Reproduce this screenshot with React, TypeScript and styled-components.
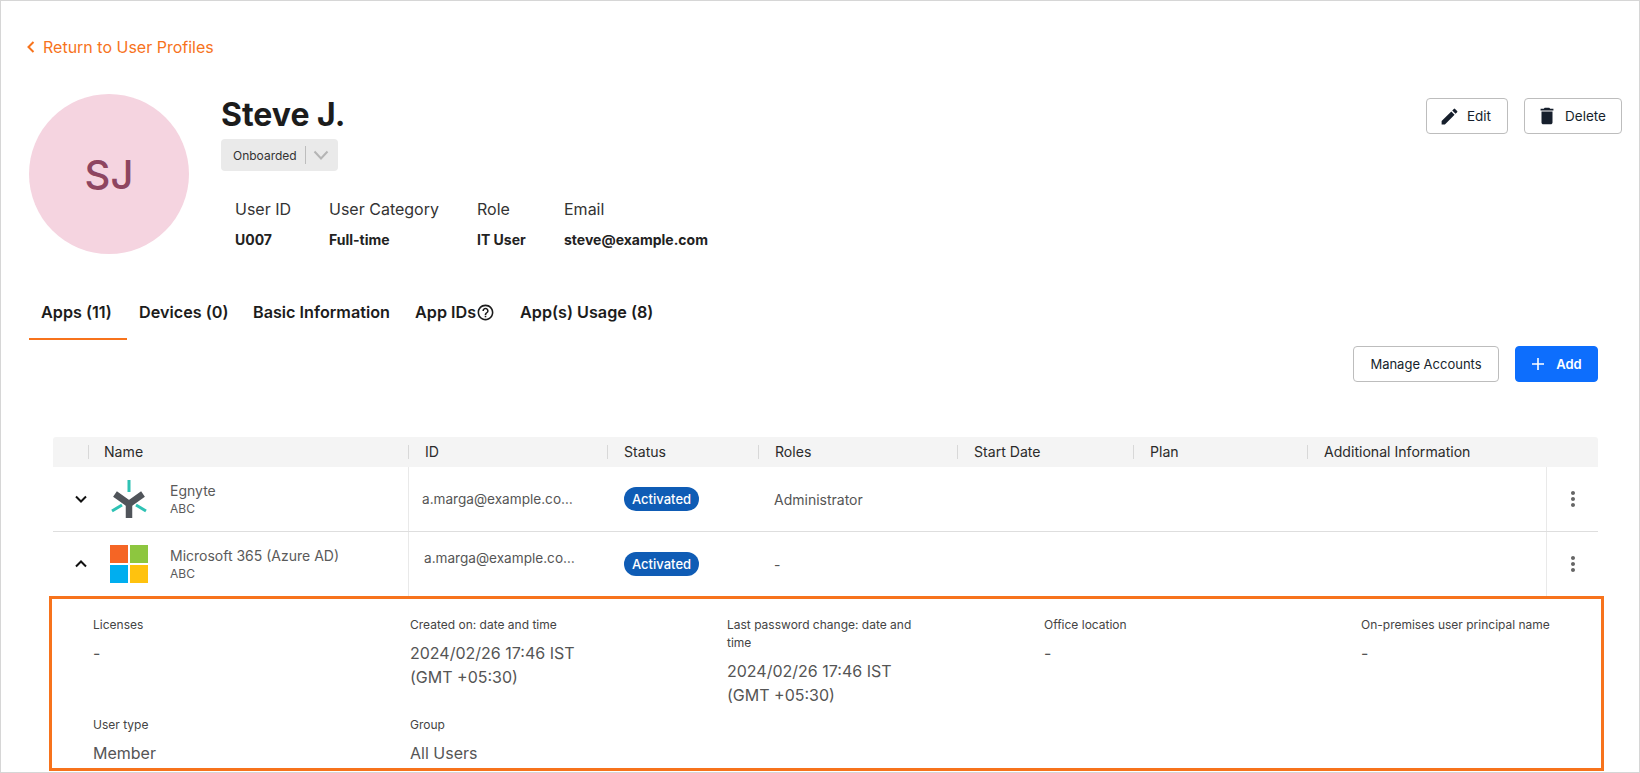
import { createGlobalStyle, styled } from "styled-components";
import { MdDelete, MdEdit, MdHelpOutline, MdMoreVert } from "react-icons/md";

const GlobalStyle = createGlobalStyle`
  * {
    box-sizing: border-box;
  }
  html, body {
    margin: 0;
    padding: 0;
    background: #fff;
    font-family: Inter, "Liberation Sans", sans-serif;
    color: #1a1a1a;
  }
`;

const Page = styled.div`
  width: 1640px;
  height: 773px;
  overflow: hidden;
  border: 1px solid #d6d6d6;
  padding: 37px 17px 0 28px;
`;

const BackLink = styled.a`
  display: flex;
  align-items: center;
  gap: 8px;
  height: 18px;
  margin-left: -2px;
  color: #f7731c;
  font-size: 16px;
  svg {
    width: 8px;
    height: 12px;
  }
`;

const Profile = styled.section`
  display: flex;
  margin-top: 38px;
`;

const Avatar = styled.div`
  width: 160px;
  height: 160px;
  flex: none;
  border-radius: 50%;
  background: #f5d4e0;
  color: #8e4560;
  font-size: 40px;
  font-weight: 500;
  display: flex;
  align-items: center;
  justify-content: center;
`;

const ProfileBody = styled.div`
  margin-left: 32px;
  flex: 1;
`;

const Name = styled.h1`
  margin: 3px 0 0;
  font-size: 32px;
  line-height: 36px;
  font-weight: 700;
  color: #1c1c1c;
`;

const StatusSelect = styled.div`
  display: flex;
  align-items: center;
  width: 117px;
  height: 32px;
  margin-top: 6px;
  padding-left: 12px;
  border-radius: 4px;
  background: #eaeaea;
  font-size: 12px;
  color: #333;
`;

const SelectDivider = styled.span`
  width: 1px;
  height: 18px;
  margin: 0 7px 0 8px;
  background: #bdbdbd;
`;

const InfoGrid = styled.div`
  display: grid;
  grid-template-columns: 94px 148px 87px auto;
  justify-content: start;
  margin: 28px 0 0 14px;
`;

const InfoLabel = styled.div`
  font-size: 16px;
  line-height: 20px;
  color: #333;
`;

const InfoValue = styled.div`
  margin-top: 11px;
  font-size: 14px;
  line-height: 20px;
  font-weight: 700;
  color: #222;
`;

const ProfileActions = styled.div`
  display: flex;
  gap: 16px;
  margin-top: 4px;
`;

const Button = styled.button<{ $primary?: boolean; $w: number; $gap?: number }>`
  display: flex;
  align-items: center;
  justify-content: center;
  gap: ${(p) => p.$gap ?? 7}px;
  width: ${(p) => p.$w}px;
  height: 36px;
  border-radius: 4px;
  border: 1px solid ${(p) => (p.$primary ? "#0d6efd" : "#bdbdbd")};
  background: ${(p) => (p.$primary ? "#0d6efd" : "#fff")};
  color: ${(p) => (p.$primary ? "#fff" : "#161f2c")};
  font-family: inherit;
  font-size: 13px;
  font-weight: ${(p) => (p.$primary ? 600 : 400)};
  padding: 0;
  svg {
    flex: none;
  }
`;

const IconButton = styled(Button)`
  font-size: 13.5px;
  padding-right: 4px;
`;

const Tabs = styled.nav`
  display: flex;
  margin-top: 36px;
`;

const Tab = styled.div<{ $active?: boolean; $w: number }>`
  width: ${(p) => p.$w}px;
  height: 50px;
  padding: 12px 0 0 12px;
  font-size: 16.2px;
  line-height: 20px;
  font-weight: 600;
  color: #1c1c1c;
  border-bottom: 2px solid ${(p) => (p.$active ? "#f7731c" : "transparent")};
  display: flex;
  align-items: flex-start;
  white-space: nowrap;
  svg {
    width: 19px;
    height: 19px;
    margin-top: 1px;
  }
`;

const Toolbar = styled.div`
  display: flex;
  justify-content: flex-end;
  gap: 16px;
  margin: 6px 24px 0 0;
`;

const Table = styled.div`
  margin: 55px 24px 0 24px;
`;

const columns = "355px 199px 151px 199px 176px 174px 239px 52px";

const HeadRow = styled.div`
  display: grid;
  grid-template-columns: ${columns};
  height: 30px;
  padding-bottom: 1px;
  background: #f4f4f4;
  border-radius: 3px 3px 0 0;
  font-size: 14.1px;
  color: #2b2b2b;
`;

const HeadCell = styled.div<{ $nameCol?: boolean }>`
  display: flex;
  align-items: center;
  padding-left: ${(p) => (p.$nameCol ? "35px" : "0")};
  &::before {
    content: "";
    width: 1px;
    height: 14px;
    margin-right: ${(p) => (p.$nameCol ? "15px" : "16px")};
    background: #d8d8d8;
  }
`;

const Row = styled.div<{ $last?: boolean }>`
  display: grid;
  grid-template-columns: ${columns};
  height: ${(p) => (p.$last ? "64px" : "65px")};
  border-bottom: ${(p) => (p.$last ? "none" : "1px solid #dedede")};
  font-size: 14px;
  color: #555;
`;

const NameCell = styled.div`
  display: flex;
  align-items: center;
  margin-right: -1px;
  border-right: 1px solid #e9e9e9;
  svg {
    flex: none;
  }
`;

const Chevron = styled.svg`
  width: 12px;
  height: 8px;
  margin: 0 23px 0 22px;
`;

const AppName = styled.div`
  margin-left: 22px;
  font-size: 14px;
  line-height: 19px;
  color: #5a5a5a;
  small {
    display: block;
    font-size: 12px;
    line-height: 17px;
  }
`;

const Cell = styled.div<{ $raise?: number; $inset?: number }>`
  display: flex;
  align-items: center;
  padding-left: ${(p) => p.$inset ?? 16}px;
  padding-bottom: ${(p) => p.$raise ?? 0}px;
  white-space: nowrap;
`;

const IdCell = styled(Cell)`
  font-size: 13.6px;
`;

const Badge = styled.span`
  height: 24px;
  padding: 0 8px;
  border-radius: 12px;
  background: #0f5cb5;
  color: #fff;
  font-size: 13px;
  font-weight: 500;
  line-height: 24px;
`;

const ActionCell = styled.div`
  display: flex;
  align-items: center;
  justify-content: center;
  border-left: 1px solid #e9e9e9;
  color: #666;
`;

const DetailPanel = styled.div`
  display: grid;
  grid-template-columns: repeat(5, 317px);
  grid-template-rows: 100px auto;
  height: 175px;
  margin: 0 -6px 0 -4px;
  padding: 17px 0 0 41px;
  border: 3px solid #f7731c;
`;

const Detail = styled.div``;

const DetailLabel = styled.div`
  width: 190px;
  font-size: 12px;
  line-height: 18px;
  color: #444;
  white-space: nowrap;
  margin-bottom: 7px;
`;

const WrappedLabel = styled(DetailLabel)`
  white-space: normal;
`;

const DetailValue = styled.div`
  width: 190px;
  font-size: 16px;
  line-height: 24px;
  color: #555;
`;

function App() {
  return (
    <Page>
      <GlobalStyle />
      <BackLink>
        <svg viewBox="0 0 8 12" fill="none" stroke="#f7731c" strokeWidth="2">
          <path d="M6.5 1 1.5 6l5 5" />
        </svg>
        Return to User Profiles
      </BackLink>

      <Profile>
        <Avatar>SJ</Avatar>
        <ProfileBody>
          <Name>Steve J.</Name>
          <StatusSelect>
            Onboarded
            <SelectDivider />
            <svg width="16" height="10" viewBox="0 0 16 10" fill="none" stroke="#b5b5b5" strokeWidth="2">
              <path d="M1.5 1.500 8 8.500l6.500-7" />
            </svg>
          </StatusSelect>
          <InfoGrid>
            <InfoLabel>User ID</InfoLabel>
            <InfoLabel>User Category</InfoLabel>
            <InfoLabel>Role</InfoLabel>
            <InfoLabel>Email</InfoLabel>
            <InfoValue>U007</InfoValue>
            <InfoValue>Full-time</InfoValue>
            <InfoValue>IT User</InfoValue>
            <InfoValue>steve@example.com</InfoValue>
          </InfoGrid>
        </ProfileBody>
        <ProfileActions>
          <IconButton $w={82}>
            <MdEdit size={21} />
            Edit
          </IconButton>
          <IconButton $w={98}>
            <MdDelete size={22} />
            Delete
          </IconButton>
        </ProfileActions>
      </Profile>

      <Tabs>
        <Tab $active $w={98}>Apps (11)</Tab>
        <Tab $w={114}>Devices (0)</Tab>
        <Tab $w={162}>Basic Information</Tab>
        <Tab $w={105}>
          App IDs
          <MdHelpOutline />
        </Tab>
        <Tab $w={160}>App(s) Usage (8)</Tab>
      </Tabs>

      <Toolbar>
        <Button $w={146}>Manage Accounts</Button>
        <Button $primary $w={83} $gap={11}>
          <svg width="14" height="14" viewBox="0 0 14 14" stroke="#fff" strokeWidth="1.6">
            <path d="M7 1v12M1 7h12" />
          </svg>
          Add
        </Button>
      </Toolbar>

      <Table>
        <HeadRow>
          <HeadCell $nameCol>Name</HeadCell>
          <HeadCell>ID</HeadCell>
          <HeadCell>Status</HeadCell>
          <HeadCell>Roles</HeadCell>
          <HeadCell>Start Date</HeadCell>
          <HeadCell>Plan</HeadCell>
          <HeadCell>Additional Information</HeadCell>
          <div />
        </HeadRow>

        <Row>
          <NameCell>
            <Chevron viewBox="0 0 12 8" fill="none" stroke="#111" strokeWidth="2">
              <path d="M1 1.500 6 6.500l5-5" />
            </Chevron>
            <svg width="38" height="39" viewBox="0 0 38 39">
              <path d="M5 14 19 24 33 14" fill="none" stroke="#50545a" strokeWidth="6.500" />
              <path d="M19 23v15" stroke="#50545a" strokeWidth="6.500" />
              <path d="M19 0v12M2 31l10-6M36 31l-10-6" stroke="#2fc2b4" strokeWidth="3" />
            </svg>
            <AppName>
              Egnyte
              <small>ABC</small>
            </AppName>
          </NameCell>
          <IdCell $inset={14}>a.marga@example.co…</IdCell>
          <Cell $inset={17}><Badge>Activated</Badge></Cell>
          <Cell>Administrator</Cell>
          <Cell />
          <Cell />
          <Cell />
          <ActionCell><MdMoreVert size={24} /></ActionCell>
        </Row>

        <Row $last>
          <NameCell>
            <Chevron viewBox="0 0 12 8" fill="none" stroke="#111" strokeWidth="2">
              <path d="M1 6.500 6 1.500l5 5" />
            </Chevron>
            <svg width="38" height="38" viewBox="0 0 38 38">
              <rect width="18" height="18" fill="#f56525" />
              <rect x="20" width="18" height="18" fill="#8dc63f" />
              <rect y="20" width="18" height="18" fill="#00aeef" />
              <rect x="20" y="20" width="18" height="18" fill="#ffc20e" />
            </svg>
            <AppName>
              Microsoft 365 (Azure AD)
              <small>ABC</small>
            </AppName>
          </NameCell>
          <IdCell $raise={12}>a.marga@example.co…</IdCell>
          <Cell $inset={17}><Badge>Activated</Badge></Cell>
          <Cell>-</Cell>
          <Cell />
          <Cell />
          <Cell />
          <ActionCell><MdMoreVert size={24} /></ActionCell>
        </Row>

        <DetailPanel>
          <Detail>
            <DetailLabel>Licenses</DetailLabel>
            <DetailValue>-</DetailValue>
          </Detail>
          <Detail>
            <DetailLabel>Created on: date and time</DetailLabel>
            <DetailValue>2024/02/26 17:46 IST (GMT +05:30)</DetailValue>
          </Detail>
          <Detail>
            <WrappedLabel>Last password change: date and time</WrappedLabel>
            <DetailValue>2024/02/26 17:46 IST (GMT +05:30)</DetailValue>
          </Detail>
          <Detail>
            <DetailLabel>Office location</DetailLabel>
            <DetailValue>-</DetailValue>
          </Detail>
          <Detail>
            <DetailLabel>On-premises user principal name</DetailLabel>
            <DetailValue>-</DetailValue>
          </Detail>
          <Detail>
            <DetailLabel>User type</DetailLabel>
            <DetailValue>Member</DetailValue>
          </Detail>
          <Detail>
            <DetailLabel>Group</DetailLabel>
            <DetailValue>All Users</DetailValue>
          </Detail>
        </DetailPanel>
      </Table>
    </Page>
  );
}

export default App;
